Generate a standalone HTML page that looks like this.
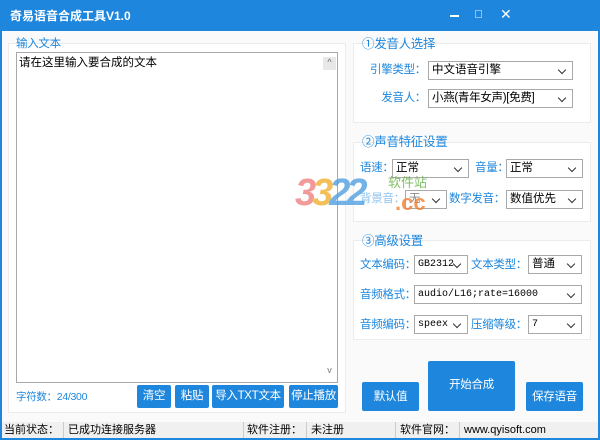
<!DOCTYPE html><html><head><meta charset="utf-8"><style>
*{margin:0;padding:0;box-sizing:border-box;white-space:nowrap}
body{width:600px;height:440px;position:relative;overflow:hidden;background:#1e87dd;font-family:"Liberation Sans","Noto Sans CJK SC",sans-serif;font-size:11px;color:#000}
.a{position:absolute}
#win{left:2px;top:31px;width:596px;height:407px;background:#fafafa}
.panel{background:#fff;border:1px solid #ececec}
.lbl{color:#1e87dd;font-size:11.5px;line-height:14px;letter-spacing:-0.3px}
.r{text-align:right}
.sel{background:#fff;border:1px solid #a9a9a9;height:19px;line-height:17px;padding-left:3px;font-size:11.5px;overflow:hidden}
.sel:after{content:"";position:absolute;right:7px;top:5px;width:5px;height:5px;border-right:1.3px solid #333;border-bottom:1.3px solid #333;transform:rotate(45deg)}
.btn{background:#1e87dd;color:#fff;text-align:center;border-radius:2px;font-size:11.5px;letter-spacing:-0.3px}
.mono{font-family:"Liberation Mono",monospace;font-size:10px}
.st{top:422px;height:16px;line-height:16px;font-size:11px;background:#f0f0f0;border-right:1px solid #ccc;overflow:hidden}
</style></head><body>
<div class="a" style="left:10px;top:7px;color:#fff;font-weight:bold;font-size:12px">奇易语音合成工具V1.0</div>
<div class="a" style="left:450px;top:15px;width:9px;height:2px;background:#fff"></div>
<div class="a" style="left:475px;top:10px;width:7px;height:8px;border:1px solid #8fc0ea"></div>
<div class="a" style="left:500px;top:6px;color:#fff;font-size:14px">✕</div>
<div id="win" class="a"></div>
<div class="a panel" style="left:8px;top:43px;width:338px;height:370px"></div>
<div class="a lbl" style="left:15px;top:37px;padding:0 1px">输入文本</div>
<div class="a" style="left:16px;top:52px;width:322px;height:331px;border:1px solid #a9a9a9;background:#fff;padding:1px 2px;font-size:11.5px">请在这里输入要合成的文本</div>
<div class="a" style="left:323px;top:57px;width:13px;height:13px;background:#e8e8e8;color:#666;font-size:9px;text-align:center">^</div>
<div class="a" style="left:323px;top:365px;width:13px;height:14px;color:#777;font-size:9px;text-align:center">v</div>
<div class="a lbl" style="left:16px;top:390px;font-size:10.5px">字符数：24/300</div>
<div class="a btn" style="left:137px;top:385px;width:34px;height:23px;line-height:23px">清空</div>
<div class="a btn" style="left:175px;top:385px;width:34px;height:23px;line-height:23px">粘贴</div>
<div class="a btn" style="left:212px;top:385px;width:72px;height:23px;line-height:23px">导入TXT文本</div>
<div class="a btn" style="left:289px;top:385px;width:49px;height:23px;line-height:23px">停止播放</div>

<div class="a panel" style="left:353px;top:43px;width:238px;height:80px"></div>
<div class="a lbl" style="left:362px;top:37px;font-size:12.5px">①发音人选择</div>
<div class="a lbl r" style="left:350px;width:76px;top:63px">引擎类型：</div>
<div class="a sel" style="left:428px;top:61px;width:145px">中文语音引擎</div>
<div class="a lbl r" style="left:350px;width:76px;top:91px">发音人：</div>
<div class="a sel" style="left:428px;top:89px;width:145px;letter-spacing:-0.3px">小燕(青年女声)[免费]</div>

<div class="a panel" style="left:353px;top:142px;width:238px;height:80px"></div>
<div class="a lbl" style="left:362px;top:135px;font-size:12.5px">②声音特征设置</div>
<div class="a lbl" style="left:360px;top:161px">语速：</div>
<div class="a sel" style="left:392px;top:159px;width:77px">正常</div>
<div class="a lbl" style="left:475px;top:161px">音量：</div>
<div class="a sel" style="left:506px;top:159px;width:77px">正常</div>
<div class="a lbl" style="left:360px;top:192px;opacity:.5">背景音：</div>
<div class="a sel" style="left:405px;top:190px;width:42px;color:#888">无</div>
<div class="a lbl r" style="left:440px;width:65px;top:192px">数字发音：</div>
<div class="a sel" style="left:506px;top:190px;width:77px">数值优先</div>

<div class="a panel" style="left:353px;top:240px;width:238px;height:100px"></div>
<div class="a lbl" style="left:362px;top:234px;font-size:12.5px">③高级设置</div>
<div class="a lbl" style="left:360px;top:258px">文本编码：</div>
<div class="a sel mono" style="left:414px;top:255px;width:54px">GB2312</div>
<div class="a lbl r" style="left:465px;width:62px;top:258px">文本类型：</div>
<div class="a sel" style="left:528px;top:255px;width:54px">普通</div>
<div class="a lbl" style="left:360px;top:288px">音频格式：</div>
<div class="a sel mono" style="left:414px;top:285px;width:168px">audio/L16;rate=16000</div>
<div class="a lbl" style="left:360px;top:318px">音频编码：</div>
<div class="a sel mono" style="left:414px;top:315px;width:54px">speex</div>
<div class="a lbl r" style="left:465px;width:62px;top:318px">压缩等级：</div>
<div class="a sel mono" style="left:528px;top:315px;width:54px">7</div>

<div class="a btn" style="left:362px;top:382px;width:57px;height:29px;line-height:31px">默认值</div>
<div class="a btn" style="left:428px;top:361px;width:87px;height:50px;line-height:48px">开始合成</div>
<div class="a btn" style="left:526px;top:382px;width:57px;height:29px;line-height:31px">保存语音</div>

<div class="a" style="left:295px;top:172px;font-size:38px;font-weight:bold;font-style:italic;color:#f0b030;opacity:.8;letter-spacing:-4px"><span style="color:#f08080">3</span>3<span style="color:#50a0e0">22</span></div>
<div class="a" style="left:395px;top:190px;font-size:22px;font-weight:bold;color:#f08030;opacity:.8">.cc</div>
<div class="a" style="left:388px;top:172px;font-size:13px;color:#60b040;opacity:.8">软件站</div>

<div class="a st" style="left:2px;width:62px;padding-left:2px">当前状态：</div>
<div class="a st" style="left:64px;width:180px;padding-left:4px">已成功连接服务器</div>
<div class="a st" style="left:244px;width:63px;padding-left:3px">软件注册：</div>
<div class="a st" style="left:307px;width:89px;padding-left:4px">未注册</div>
<div class="a st" style="left:396px;width:64px;padding-left:4px">软件官网：</div>
<div class="a st" style="left:460px;width:138px;padding-left:4px;border:0">www.qyisoft.com</div>
</body></html>
